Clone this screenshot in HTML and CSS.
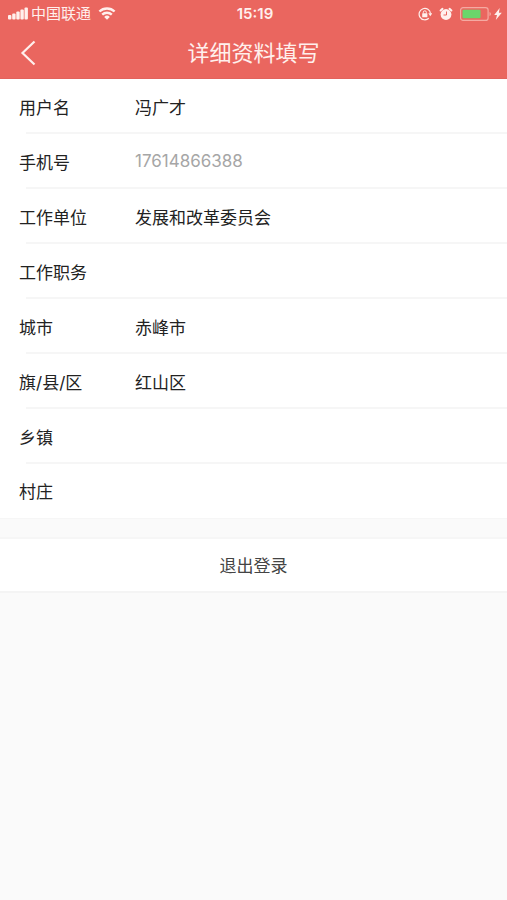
FILE: index.html
```html
<!DOCTYPE html>
<html lang="zh-CN">
<head>
  <meta charset="utf-8">
  <meta name="viewport" content="width=device-width, initial-scale=1">
  <title>详细资料填写</title>
  <link rel="stylesheet" href="styles.css">
</head>
<body>
  <header class="header">
    <div class="status">
      <div class="status-left">
        <svg class="signal" viewBox="0 0 20 13" width="20" height="13" aria-hidden="true">
          <rect x="0" y="8" width="3.400" height="4.500" rx="1"/>
          <rect x="4.200" y="6.500" width="3.400" height="6" rx="1"/>
          <rect x="8.300" y="4.500" width="3.400" height="8" rx="1"/>
          <rect x="12.400" y="2.500" width="3.400" height="10" rx="1"/>
          <rect x="16.500" y="0.500" width="3.400" height="12" rx="1"/>
        </svg>
        <span class="carrier">中国联通</span>
        <svg class="wifi" viewBox="0 0 18 13" width="18" height="13" aria-hidden="true">
          <path d="M1.400 4.500a11 11 0 0 1 15.200 0M4.200 7.600a7 7 0 0 1 9.600 0" fill="none" stroke="currentColor" stroke-width="2.400"/>
          <path d="M9 12.800 6.200 9.900a4 4 0 0 1 5.600 0z"/>
        </svg>
      </div>
      <time class="clock">15:19</time>
      <div class="status-right">
        <svg viewBox="0 0 14 14" width="14" height="14" aria-hidden="true">
          <path d="M10.800 11.200A5.700 5.700 0 1 1 12.500 6.500" fill="none" stroke="currentColor" stroke-width="1.200"/>
          <path d="M10.300 6.300h4L12.300 9.200z"/>
          <rect x="4.200" y="6.200" width="5.200" height="4" rx="0.500"/>
          <path d="M5.300 6.500V5.300a1.500 1.500 0 0 1 3 0v1.200" fill="none" stroke="currentColor"/>
        </svg>
        <svg viewBox="0 0 14 14" width="14" height="14" aria-hidden="true">
          <circle cx="7" cy="7.500" r="5.400"/>
          <path d="M1.600 3.500 3.500 1.800M12.400 3.500 10.500 1.800" fill="none" stroke="currentColor" stroke-width="2" stroke-linecap="round"/>
          <path class="hands" d="M7.500 4.500V8H4.500"/>
        </svg>
        <svg viewBox="0 0 32 14" width="32" height="14" aria-hidden="true">
          <rect class="battery-shell" x="0.600" y="0.600" width="27.500" height="12.800" rx="2.500"/>
          <rect class="battery-level" x="2.500" y="2.700" width="18" height="8.600" rx="1"/>
          <path class="battery-cap" d="M29.500 5a2.100 2.100 0 0 1 0 4z"/>
        </svg>
        <svg viewBox="0 0 8 12" width="8" height="12" aria-hidden="true">
          <path d="M5.700 0 0.200 6.900h2.800L1.800 12l6-7.200H4.900z"/>
        </svg>
      </div>
    </div>
    <div class="navbar">
      <button class="back" type="button" aria-label="返回">
        <svg viewBox="0 0 16 26" width="16" height="26" aria-hidden="true">
          <path d="M14.500 1.500 2.500 13 14.500 24.500" fill="none" stroke="currentColor" stroke-width="2.200"/>
        </svg>
      </button>
      <h1 class="title">详细资料填写</h1>
    </div>
  </header>
  <main>
    <form>
      <div class="fields">
        <div class="row"><label for="name">用户名</label><input id="name" type="text" value="冯广才"></div>
        <div class="row"><label for="phone">手机号</label><input id="phone" type="tel" value="17614866388" disabled></div>
        <div class="row"><label for="unit">工作单位</label><input id="unit" type="text" value="发展和改革委员会"></div>
        <div class="row"><label for="job">工作职务</label><input id="job" type="text"></div>
        <div class="row"><label for="city">城市</label><input id="city" type="text" value="赤峰市"></div>
        <div class="row"><label for="district">旗/县/区</label><input id="district" type="text" value="红山区"></div>
        <div class="row"><label for="town">乡镇</label><input id="town" type="text"></div>
        <div class="row"><label for="village">村庄</label><input id="village" type="text"></div>
      </div>
      <button class="logout" type="button">退出登录</button>
    </form>
  </main>
</body>
</html>
```

FILE: styles.css
```css
* {
  box-sizing: border-box;
}

body {
  margin: 0;
  background: #fafafa;
  color: #222;
  font-family: Inter, "Noto Sans CJK SC", sans-serif;
  font-size: 17px;
}

svg {
  display: block;
  fill: currentColor;
}

.header {
  background: #ea665f;
  color: #fff0ed;
  border-bottom: 1px solid #e3625c;
}

.status {
  display: grid;
  grid-template-columns: 1fr auto 1fr;
  align-items: center;
  height: 27px;
  padding: 0 5px 0 8px;
}

.status-left,
.status-right {
  display: flex;
  align-items: center;
}

.status-right {
  justify-content: flex-end;
  gap: 7px;
}

.status-right svg:last-child {
  margin-left: -5px;
}

.carrier {
  margin: 0 7px 0 3px;
  font-size: 15px;
  line-height: 20px;
  font-weight: 400;
}

.clock {
  font-size: 15px;
  line-height: 20px;
  font-weight: 600;
}

.hands {
  fill: none;
  stroke: #ea665f;
}

.battery-shell {
  fill: none;
  stroke: #f5aaa2;
  stroke-width: 1.2;
}

.battery-cap {
  fill: #f5aaa2;
}

.battery-level {
  fill: #6bd66b;
}

.navbar {
  display: grid;
  grid-template-columns: 56px 1fr 56px;
  align-items: center;
  height: 51px;
}

.back {
  display: flex;
  justify-content: center;
  padding: 0;
  border: 0;
  background: none;
  color: inherit;
}

.title {
  margin: 0;
  text-align: center;
  font-size: 22px;
  line-height: 32px;
  font-weight: 400;
}

.fields {
  background: #fff;
  border-bottom: 1px solid #f6f6f6;
}

.row {
  display: grid;
  grid-template-columns: 116px 1fr;
  align-items: center;
  height: 55px;
  padding: 0 0 1px 19px;
  background: linear-gradient(#f6f6f6, #f6f6f6) 26px 100% / 100% 2px no-repeat;
}

.row:last-child {
  height: 54px;
  background: none;
}

.row input {
  width: 100%;
  min-width: 0;
  padding: 0;
  border: 0;
  outline: 0;
  background: none;
  color: inherit;
  font: inherit;
}

.row input:disabled {
  color: #a6a6a6;
}

.logout {
  display: block;
  width: 100%;
  height: 56px;
  margin-top: 18px;
  padding: 0 0 2px;
  border: 0;
  border-top: 2px solid #f6f6f6;
  border-bottom: 2px solid #f4f4f4;
  background: #fff;
  color: #444;
  font: inherit;
}
```
